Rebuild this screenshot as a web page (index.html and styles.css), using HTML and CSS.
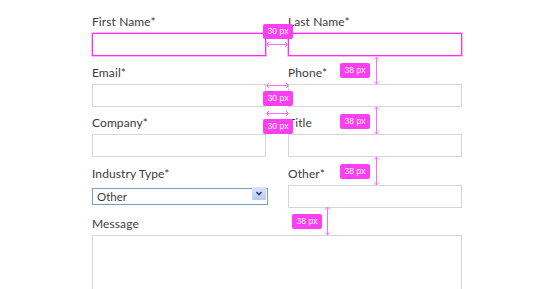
FILE: index.html
```html
<!DOCTYPE html>
<html>

<head>
    <title>Contact form spacing</title>
    <meta name="viewport" content="width=device-width, initial-scale=1" charset="UTF-8">
    <link rel="stylesheet" href="styles.css">
</head>

<body>
    <div class="page">
        <!-- form -->
        <form class="form">
            <label class="field">
                <span>First Name*</span>
                <input class="box hl" type="text">
            </label>
            <label class="field">
                <span>Last Name*</span>
                <input class="box hl" type="text">
            </label>
            <label class="field">
                <span>Email*</span>
                <input class="box" type="text">
            </label>
            <label class="field">
                <span>Phone*</span>
                <input class="box" type="text">
            </label>
            <label class="field">
                <span>Company*</span>
                <input class="box" type="text">
            </label>
            <label class="field">
                <span>Title</span>
                <input class="box" type="text">
            </label>
            <label class="field">
                <span>Industry Type*</span>
                <div class="select">
                    <select>
                        <option>Other</option>
                    </select>
                    <i class="arrow">
                        <svg width="14" height="13" viewBox="0 0 14 13">
                            <path d="M4.5 5 L7 7.5 L9.5 5" fill="none" stroke="#2b3f7a" stroke-width="1.6"/>
                        </svg>
                    </i>
                </div>
            </label>
            <label class="field">
                <span>Other*</span>
                <input class="box" type="text">
            </label>
            <label class="field wide">
                <span>Message</span>
                <textarea class="box msg"></textarea>
            </label>
        </form>

        <!-- spacing marks -->
        <svg class="arrows" width="550" height="289">
            <g stroke="#ff6cf5" stroke-width="1" fill="none">
                <path d="M266.5 44.5 H287.5 M269 42 L266.5 44.5 L269 47 M285 42 L287.5 44.5 L285 47"/>
                <path d="M266.5 85.5 H288.5 M269 83 L266.5 85.5 L269 88 M286 83 L288.5 85.5 L286 88"/>
                <path d="M266.5 113.5 H288.5 M269 111 L266.5 113.5 L269 116 M286 111 L288.5 113.5 L286 116"/>
                <path d="M376.5 57 V84 M374 59.5 L376.5 57 L379 59.5 M374 81.5 L376.5 84 L379 81.5"/>
                <path d="M376.5 107 V134 M374 109.5 L376.5 107 L379 109.5 M374 131.5 L376.5 134 L379 131.5"/>
                <path d="M376.5 157 V185 M374 159.5 L376.5 157 L379 159.5 M374 182.5 L376.5 185 L379 182.5"/>
                <path d="M327.5 207 V235 M325 209.5 L327.5 207 L330 209.5 M325 232.5 L327.5 235 L330 232.5"/>
            </g>
        </svg>
        <b class="tag t1">30 px</b>
        <b class="tag t2">30 px</b>
        <b class="tag t3">30 px</b>
        <b class="tag t4">38 px</b>
        <b class="tag t5">38 px</b>
        <b class="tag t6">38 px</b>
        <b class="tag t7">38 px</b>
    </div>
</body>

</html>
```

FILE: styles.css
```css
body {
    margin: 0;
    background: #ffffff;
    font-family: "Lato", "Open Sans", sans-serif;
    color: #3c3c3c;
}

.page {
    position: relative;
    width: 550px;
    height: 289px;
    overflow: hidden;
}

.form {
    display: grid;
    grid-template-columns: 174px 174px;
    column-gap: 22px;
    row-gap: 8.5px;
    padding: 14px 0 0 92px;
    margin: 0;
}

.field {
    display: flex;
    flex-direction: column;
}

.field span {
    font-size: 12px;
    line-height: 16px;
    height: 16px;
    margin-bottom: 3px;
    letter-spacing: 0.1px;
}

.wide {
    grid-column: 1 / 3;
}

.box {
    box-sizing: border-box;
    height: 23px;
    margin: 0;
    border: 1px solid #d6d6d6;
    background: #ffffff;
    padding: 0 4px;
}

.hl {
    border: 1px solid #ff2ef5;
    box-shadow: 0 0 0 0.6px #ff8cf8;
}

.msg {
    height: 90px;
    width: 370px;
    resize: none;
}

.select {
    position: relative;
    width: 176px;
    height: 17px;
}

.select select {
    appearance: none;
    box-sizing: border-box;
    width: 176px;
    height: 17px;
    margin: 0;
    border: 1px solid #7f9db9;
    border-radius: 0;
    background: #ffffff;
    padding: 0 0 0 4px;
    font-family: "Lato", "Open Sans", sans-serif;
    font-size: 11.5px;
    line-height: 15px;
    color: #3c3c3c;
}

.arrow {
    position: absolute;
    right: 2px;
    top: 2px;
    width: 14px;
    height: 13px;
    background: linear-gradient(#d9e4fb, #b8cbf3);
    border-radius: 1px;
}

.arrow svg {
    display: block;
}

.arrows {
    position: absolute;
    left: 0;
    top: 0;
}

.tag {
    position: absolute;
    width: 30px;
    height: 15px;
    background: #ff3df2;
    border-radius: 2px;
    color: #ffffff;
    font-family: "Liberation Sans", sans-serif;
    font-weight: normal;
    font-size: 8.5px;
    line-height: 15px;
    text-align: center;
}

.t1 { left: 263px; top: 24px; }
.t2 { left: 263px; top: 91px; }
.t3 { left: 263px; top: 119px; }
.t4 { left: 340px; top: 63px; }
.t5 { left: 340px; top: 114px; }
.t6 { left: 340px; top: 164px; }
.t7 { left: 292px; top: 214px; }
```
